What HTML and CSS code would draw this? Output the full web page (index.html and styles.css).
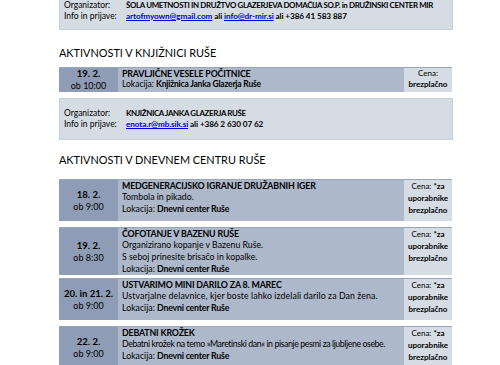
FILE: index.html
```html
<!DOCTYPE html>
<html lang="sl">
<head>
<meta charset="utf-8">
<title>Aktivnosti</title>
<link rel="stylesheet" href="styles.css">
</head>
<body>
<div class="page">
  <div class="org org-first">
    <div class="org-line"><span class="org-label">Organizator:</span><span class="org-val org-name">ŠOLA UMETNOSTI IN DRUŽTVO GLAZERJEVA DOMAČIJA SO.P. in DRUŽINSKI CENTER MIR</span></div>
    <div class="org-line"><span class="org-label">Info in prijave:</span><span class="org-val org-contact"><a class="lnk">artofmyown@gmail.com</a> ali <a class="lnk">info@dr-mir.si</a> ali +386 41 583 887</span></div>
  </div>

  <h2 class="section section-lib">AKTIVNOSTI V KNJIŽNICI RUŠE</h2>

  <div class="row row-lib">
    <div class="date"><b>19. 2.</b><span>ob 10:00</span></div>
    <div class="main">
      <div class="title">PRAVLJIČNE VESELE POČITNICE</div>
      <div class="line">Lokacija: <b>Knjižnica Janka Glazerja Ruše</b></div>
    </div>
    <div class="price"><span>Cena:</span><b>brezplačno</b></div>
  </div>

  <div class="org org-second">
    <div class="org-line"><span class="org-label">Organizator:</span><span class="org-val org-name">KNJIŽNICA JANKA GLAZERJA RUŠE</span></div>
    <div class="org-line"><span class="org-label">Info in prijave:</span><span class="org-val org-contact"><a class="lnk">enota.r@mb.sik.si</a> ali +386 2 630 07 62</span></div>
  </div>

  <h2 class="section section-dc">AKTIVNOSTI V DNEVNEM CENTRU RUŠE</h2>

  <div class="row row-dc">
    <div class="date"><b>18. 2.</b><span>ob 9:00</span></div>
    <div class="main">
      <div class="title">MEDGENERACIJSKO IGRANJE DRUŽABNIH IGER</div>
      <div class="line">Tombola in pikado.</div>
      <div class="line">Lokacija: <b>Dnevni center Ruše</b></div>
    </div>
    <div class="price"><span>Cena: <b>*za</b></span><b>uporabnike</b><b>brezplačno</b></div>
  </div>

  <div class="row row-dc row-tight">
    <div class="date"><b>19. 2.</b><span>ob 8:30</span></div>
    <div class="main">
      <div class="title">ČOFOTANJE V BAZENU RUŠE</div>
      <div class="line">Organizirano kopanje v Bazenu Ruše.</div>
      <div class="line">S seboj prinesite brisačo in kopalke.</div>
      <div class="line">Lokacija: <b>Dnevni center Ruše</b></div>
    </div>
    <div class="price"><span>Cena: <b>*za</b></span><b>uporabnike</b><b>brezplačno</b></div>
  </div>

  <div class="row row-dc">
    <div class="date"><b>20. in 21. 2.</b><span>ob 9:00</span></div>
    <div class="main">
      <div class="title">USTVARIMO MINI DARILO ZA 8. MAREC</div>
      <div class="line line-wide">Ustvarjalne delavnice, kjer boste lahko izdelali darilo za Dan žena.</div>
      <div class="line">Lokacija: <b>Dnevni center Ruše</b></div>
    </div>
    <div class="price"><span>Cena: <b>*za</b></span><b>uporabnike</b><b>brezplačno</b></div>
  </div>

  <div class="row row-dc">
    <div class="date"><b>22. 2.</b><span>ob 9:00</span></div>
    <div class="main">
      <div class="title">DEBATNI KROŽEK</div>
      <div class="line line-long">Debatni krožek na temo »Maretinski dan« in pisanje pesmi za ljubljene osebe.</div>
      <div class="line">Lokacija: <b>Dnevni center Ruše</b></div>
    </div>
    <div class="price"><span>Cena: <b>*za</b></span><b>uporabnike</b><b>brezplačno</b></div>
  </div>
</div>
</body>
</html>
```

FILE: styles.css
```css
html, body {
  margin: 0;
  padding: 0;
  background: #ffffff;
}
body {
  font-family: Lato, "Open Sans", sans-serif;
  color: #000;
  font-size: 8.5px;
}
.page {
  width: 394px;
  margin-left: 59px;
  display: flex;
  flex-direction: column;
}
.org {
  background: #d6dce4;
  border: 1px solid #c8cfd9;
  border-top: none;
  padding: 0 4px;
  display: flex;
  flex-direction: column;
}
.org-first {
  padding-bottom: 8px;
}
.org-second {
  border-top: 1px solid #c8cfd9;
  margin-top: 6px;
  padding-top: 9px;
  padding-bottom: 10px;
}
.org-line {
  display: flex;
  line-height: 10.5px;
  white-space: nowrap;
}
.org-label {
  width: 62px;
  flex: none;
}
.org-val {
  font-weight: 700;
}
.org-name {
  font-size: 7.9px;
  letter-spacing: -0.35px;
}
.org-contact {
  font-size: 8.2px;
  letter-spacing: -0.1px;
}
.lnk {
  color: #0000e6;
  text-decoration: underline;
}
.section {
  font-size: 10.9px;
  font-weight: 400;
  line-height: 13px;
  margin: 0;
}
.section-lib {
  margin-top: 16px;
  margin-bottom: 8px;
}
.section-dc {
  margin-top: 13px;
  margin-bottom: 13px;
}
.row {
  display: flex;
  width: 393px;
  border-top: 1px solid #97a6bc;
}
.row-dc {
  margin-bottom: 6px;
}
.row-dc.row-tight {
  margin-bottom: 3px;
}
.date {
  width: 59px;
  flex: none;
  background: #8e9db5;
  display: flex;
  flex-direction: column;
  align-items: center;
  justify-content: center;
  line-height: 12px;
  font-size: 9px;
}
.date b {
  font-size: 9.5px;
}
.main {
  flex: 1;
  min-width: 0;
  background: #adb9ca;
  padding: 0 4px;
  display: flex;
  flex-direction: column;
}
.row-dc .main {
  padding-bottom: 6px;
}
.row-dc.row-tight .main {
  padding-bottom: 0;
}
.title {
  font-weight: 700;
  font-size: 8.8px;
  letter-spacing: -0.15px;
  line-height: 11px;
  white-space: nowrap;
}
.line {
  font-size: 8.75px;
  line-height: 12px;
  white-space: nowrap;
}
.line b {
  letter-spacing: -0.2px;
}
.line-wide {
  letter-spacing: 0.1px;
}
.line-long {
  letter-spacing: -0.4px;
}
.row-lib .line {
  font-size: 8.5px;
  line-height: 11px;
}
.price {
  width: 48px;
  flex: none;
  background: #d6dce4;
  display: flex;
  flex-direction: column;
  align-items: center;
  text-align: center;
  font-size: 8px;
  line-height: 11px;
}
.row-dc .price {
  line-height: 12px;
}
```
